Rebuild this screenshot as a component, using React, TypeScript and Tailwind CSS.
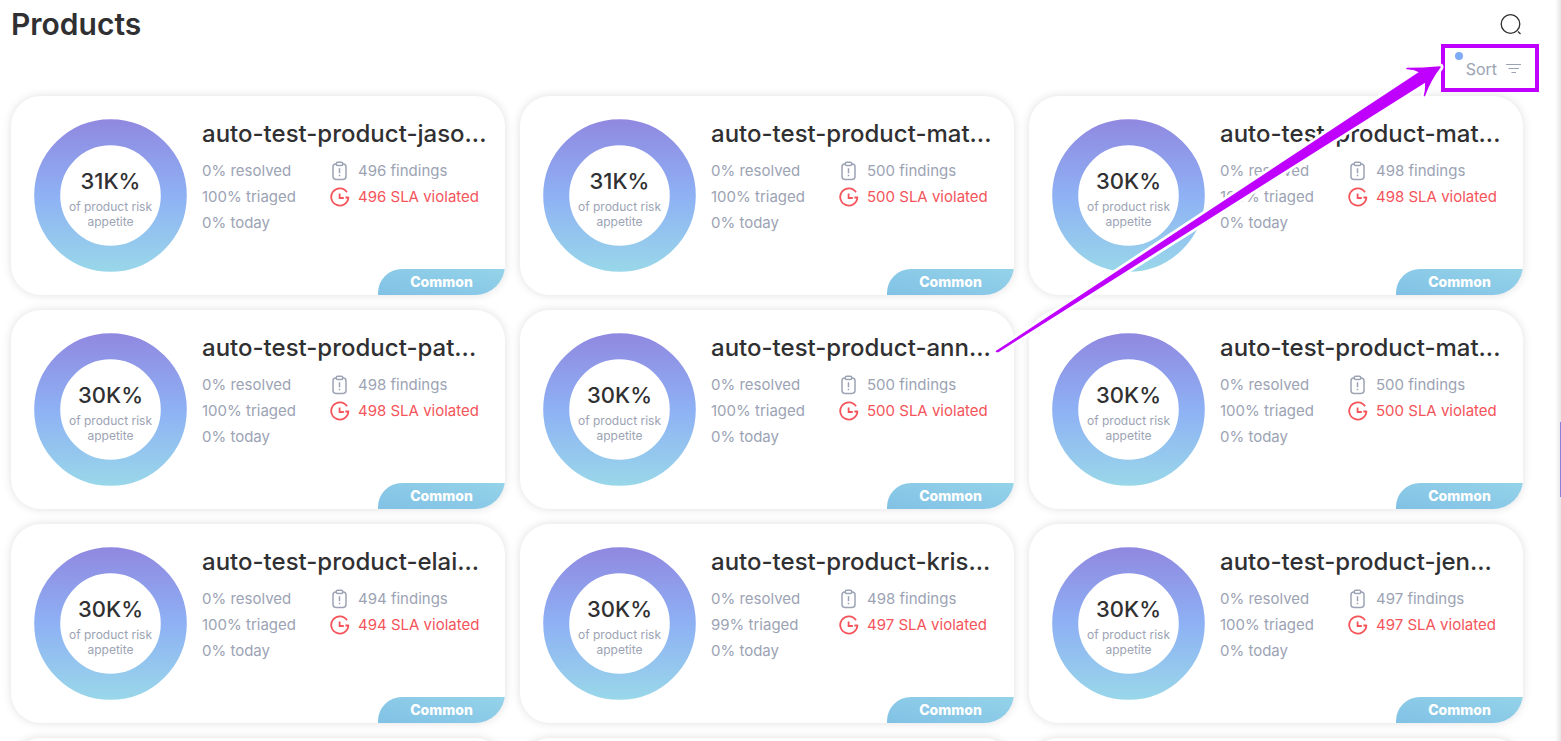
import React from "react";

type Product = {
  name: string;
  risk: string;
  triaged: string;
  findings: number;
  violated: number;
};

const products: Product[] = [
  { name: "auto-test-product-jaso...", risk: "31K%", triaged: "100%", findings: 496, violated: 496 },
  { name: "auto-test-product-mat...", risk: "31K%", triaged: "100%", findings: 500, violated: 500 },
  { name: "auto-test-product-mat...", risk: "30K%", triaged: "100%", findings: 498, violated: 498 },
  { name: "auto-test-product-pat...", risk: "30K%", triaged: "100%", findings: 498, violated: 498 },
  { name: "auto-test-product-ann...", risk: "30K%", triaged: "100%", findings: 500, violated: 500 },
  { name: "auto-test-product-mat...", risk: "30K%", triaged: "100%", findings: 500, violated: 500 },
  { name: "auto-test-product-elai...", risk: "30K%", triaged: "100%", findings: 494, violated: 494 },
  { name: "auto-test-product-kris...", risk: "30K%", triaged: "99%", findings: 498, violated: 497 },
  { name: "auto-test-product-jen...", risk: "30K%", triaged: "100%", findings: 497, violated: 497 },
];

function FindingsIcon() {
  return (
    <svg width="20" height="20" viewBox="0 0 20 20" fill="none" stroke="#9ca3b4" strokeWidth="1.5" aria-hidden="true">
      <path d="M6.500 3H5.800C4 3 3 4 3 5.800V15.600C3 17.400 4 18.400 5.800 18.400H13.200C15 18.400 16 17.400 16 15.600V5.800C16 4 15 3 13.200 3H12.500" />
      <rect x="6.200" y="1.200" width="6.600" height="3.200" rx="1.500" />
      <path d="M9.500 7.200V12.200M9.500 13.700V15.200" strokeWidth="1.500" />
    </svg>
  );
}

function SlaIcon() {
  return (
    <svg width="20" height="20" viewBox="0 0 20 20" fill="none" stroke="#f4545a" strokeWidth="1.800" aria-hidden="true">
      <path d="M17 5.200A8.600 8.600 0 1 0 18.400 10.500H15.400" strokeLinejoin="round" />
      <path d="M9.600 6.400V11H13.800" />
    </svg>
  );
}

function Donut() {
  return (
    <svg className="col-start-1 row-start-1 size-full" viewBox="0 0 154 154" fill="none" aria-hidden="true">
      <defs>
        <linearGradient id="ring" x1="0" y1="0" x2="0" y2="154" gradientUnits="userSpaceOnUse">
          <stop offset="0" stopColor="#9088e0" />
          <stop offset="0.5" stopColor="#8eb1f4" />
          <stop offset="1" stopColor="#99d7e9" />
        </linearGradient>
      </defs>
      <circle cx="77" cy="77" r="63.700" stroke="url(#ring)" strokeWidth="26.200" />
    </svg>
  );
}

function ProductCard({ product }: { product: Product }) {
  return (
    <article className="flex h-[199px] flex-col overflow-hidden rounded-[30px] bg-white shadow-[0_0_10px_rgba(0,0,0,0.13)]">
      <div className="flex min-h-0 flex-1 gap-[15px] pl-[23px] pt-[23px]">
        <div className="grid size-[153px] shrink-0 place-items-center">
          <Donut />
          <div className="col-start-1 row-start-1 flex w-[96px] flex-col items-center pt-1 text-center">
            <strong className="text-[22px] font-medium leading-7 text-[#303032]">{product.risk}</strong>
            <span className="pt-1 text-[12px] leading-[15px] text-[#9ca3b4]">of product risk appetite</span>
          </div>
        </div>
        <div className="min-w-0 flex-1">
          <h2 className="whitespace-nowrap text-[24px] font-medium leading-[30px] text-[#303032]">{product.name}</h2>
          <div className="flex gap-8 pt-[9px] text-[15px] leading-[26px] text-[#9ca3b4]">
            <ul className="w-[96px] whitespace-nowrap">
              <li>0% resolved</li>
              <li>{product.triaged} triaged</li>
              <li>0% today</li>
            </ul>
            <ul className="whitespace-nowrap">
              <li className="flex items-center gap-2">
                <FindingsIcon />
                {product.findings} findings
              </li>
              <li className="flex items-center gap-2 text-[#f4545a]">
                <SlaIcon />
                {product.violated} SLA violated
              </li>
            </ul>
          </div>
        </div>
      </div>
      <span className="h-[26px] w-[127px] shrink-0 self-end rounded-tl-[24px] bg-linear-to-tr from-[#81c1e5] to-[#95d3e9] text-center text-[14px] font-extrabold leading-[26px] text-white">
        Common
      </span>
    </article>
  );
}

function Arrow() {
  const outline =
    "M996.500 351.500L1420.500 72Q1415 69 1407 68.500Q1423 68.500 1440 67Q1430 80 1424.500 95.500Q1426.500 88 1425.500 81.500L998 351.500Z";
  return (
    <svg
      className="pointer-events-none absolute left-0 top-0"
      width="1561"
      height="400"
      viewBox="0 0 1561 400"
      fill="none"
      aria-hidden="true"
    >
      <path d={outline} fill="#fff" stroke="#fff" strokeWidth="7" strokeLinejoin="round" />
      <path d={outline} fill="#bf00ff" stroke="#bf00ff" strokeWidth="1.500" strokeLinejoin="round" />
    </svg>
  );
}

export default function App() {
  return (
    <div className="relative flex h-screen overflow-hidden bg-white font-['Inter',sans-serif]">
      <main className="min-w-0 flex-1 pl-[11px]">
        <header className="flex h-12 items-center justify-between pr-[38px]">
          <h1 className="text-[30px] font-semibold leading-9 text-[#303032]">Products</h1>
          <button type="button" aria-label="Search" className="flex size-6 items-center justify-center">
            <svg width="24" height="24" viewBox="0 0 24 24" fill="none" stroke="#303032" strokeWidth="1.300" aria-hidden="true">
              <circle cx="11.500" cy="12" r="9.300" />
              <path d="M19 19.500L21.500 22" />
            </svg>
          </button>
        </header>
        <div className="flex h-12 justify-end pr-[38px]">
          <button type="button" className="relative flex h-[42px] items-center gap-2 text-[16px] text-[#9ca3b4]">
            <span className="absolute -left-[11px] top-1 size-2 rounded-full bg-[#7faaf8]" />
            Sort
            <svg width="18" height="12" viewBox="0 0 18 12" fill="none" stroke="#9ca3b4" strokeWidth="1.200" aria-hidden="true">
              <path d="M1 1.500H16M3.500 5.500H14M6.500 9.500H11" />
            </svg>
          </button>
        </div>
        <section className="grid grid-cols-3 gap-[15px] pr-[38px]">
          {products.map((product, index) => (
            <ProductCard key={index} product={product} />
          ))}
          <div className="h-[199px] rounded-[30px] bg-white shadow-[0_0_10px_rgba(0,0,0,0.13)]" />
          <div className="h-[199px] rounded-[30px] bg-white shadow-[0_0_10px_rgba(0,0,0,0.13)]" />
          <div className="h-[199px] rounded-[30px] bg-white shadow-[0_0_10px_rgba(0,0,0,0.13)]" />
        </section>
      </main>
      <div className="absolute inset-y-0 right-0 w-[6px] bg-linear-to-r from-transparent to-black/10" />
      <div className="absolute right-0 top-[422px] h-[75px] w-px bg-[#8b7fe0]" />
      <div className="pointer-events-none absolute right-[22px] top-[44px] h-[48px] w-[98px] border-4 border-[#bf00ff]" />
      <Arrow />
    </div>
  );
}
